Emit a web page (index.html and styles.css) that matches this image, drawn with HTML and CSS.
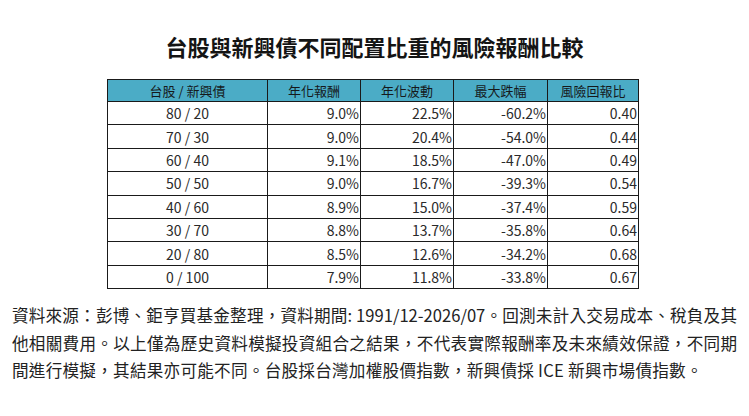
FILE: index.html
```html
<!DOCTYPE html>
<html lang="zh-Hant">
<head>
<meta charset="utf-8">
<title>台股與新興債不同配置比重的風險報酬比較</title>
<link rel="stylesheet" href="styles.css">
</head>
<body>
<div class="page">
  <h1 class="title">台股與新興債不同配置比重的風險報酬比較</h1>
  <div class="table-wrap">
    <table class="data">
      <colgroup>
        <col class="c1"><col class="c2"><col class="c3"><col class="c4"><col class="c5">
      </colgroup>
      <thead>
        <tr><th>台股 / 新興債</th><th>年化報酬</th><th>年化波動</th><th>最大跌幅</th><th>風險回報比</th></tr>
      </thead>
      <tbody>
        <tr><td class="mix">80 / 20</td><td>9.0%</td><td>22.5%</td><td>-60.2%</td><td>0.40</td></tr>
        <tr><td class="mix">70 / 30</td><td>9.0%</td><td>20.4%</td><td>-54.0%</td><td>0.44</td></tr>
        <tr><td class="mix">60 / 40</td><td>9.1%</td><td>18.5%</td><td>-47.0%</td><td>0.49</td></tr>
        <tr><td class="mix">50 / 50</td><td>9.0%</td><td>16.7%</td><td>-39.3%</td><td>0.54</td></tr>
        <tr><td class="mix">40 / 60</td><td>8.9%</td><td>15.0%</td><td>-37.4%</td><td>0.59</td></tr>
        <tr><td class="mix">30 / 70</td><td>8.8%</td><td>13.7%</td><td>-35.8%</td><td>0.64</td></tr>
        <tr><td class="mix">20 / 80</td><td>8.5%</td><td>12.6%</td><td>-34.2%</td><td>0.68</td></tr>
        <tr><td class="mix">0 / 100</td><td>7.9%</td><td>11.8%</td><td>-33.8%</td><td>0.67</td></tr>
      </tbody>
    </table>
  </div>
  <p class="note"><span class="line full">資料來源：彭博、鉅亨買基金整理，資料期間: 1991/12-2026/07。回測未計入交易成本、稅負及其</span><span class="line full">他相關費用。以上僅為歷史資料模擬投資組合之結果，不代表實際報酬率及未來績效保證，不同期</span><span class="line last">間進行模擬，其結果亦可能不同。台股採台灣加權股價指數，新興債採 ICE 新興市場債指數。</span></p>
</div>
</body>
</html>
```

FILE: styles.css
```css
html, body {
  margin: 0;
  padding: 0;
  background: #ffffff;
}

body {
  font-family: "Noto Sans CJK TC", "Noto Sans", sans-serif;
  color: #1f1f1f;
}

.page {
  width: 749px;
  height: 416px;
  overflow: hidden;
  padding-top: 32px;
  box-sizing: border-box;
}

.title {
  margin: 0;
  font-size: 22px;
  line-height: 28px;
  font-weight: 700;
  text-align: center;
  color: #141414;
}

.table-wrap {
  padding: 19px 0 0 107px;
}

.data {
  border-collapse: collapse;
  width: 531px;
  table-layout: fixed;
  font-size: 14px;
}

.c1 { width: 160px; }
.c2 { width: 93px; }
.c3 { width: 93px; }
.c4 { width: 94px; }
.c5 { width: 91px; }

.data th {
  background: #4bacc6;
  color: #15191b;
  font-weight: 400;
  font-size: 13px;
  height: 21px;
  padding: 0;
  border: 1px solid #1a1a1a;
  text-align: center;
  line-height: 19px;
}

.data td {
  height: 23.4px;
  padding: 0 1px 0 0;
  border: 1px solid #1a1a1a;
  text-align: right;
  line-height: 20px;
  color: #2a2a2a;
  box-sizing: border-box;
}

.data td.mix {
  text-align: center;
  padding: 0;
}

.note {
  margin: 13px 0 0 12px;
  width: 725px;
  font-size: 16.6px;
  line-height: 27.5px;
  color: #222222;
}

.line {
  display: block;
  white-space: nowrap;
}

.line.full {
  text-align: justify;
  text-align-last: justify;
}

.line.last {
  letter-spacing: 0.25px;
}
```
